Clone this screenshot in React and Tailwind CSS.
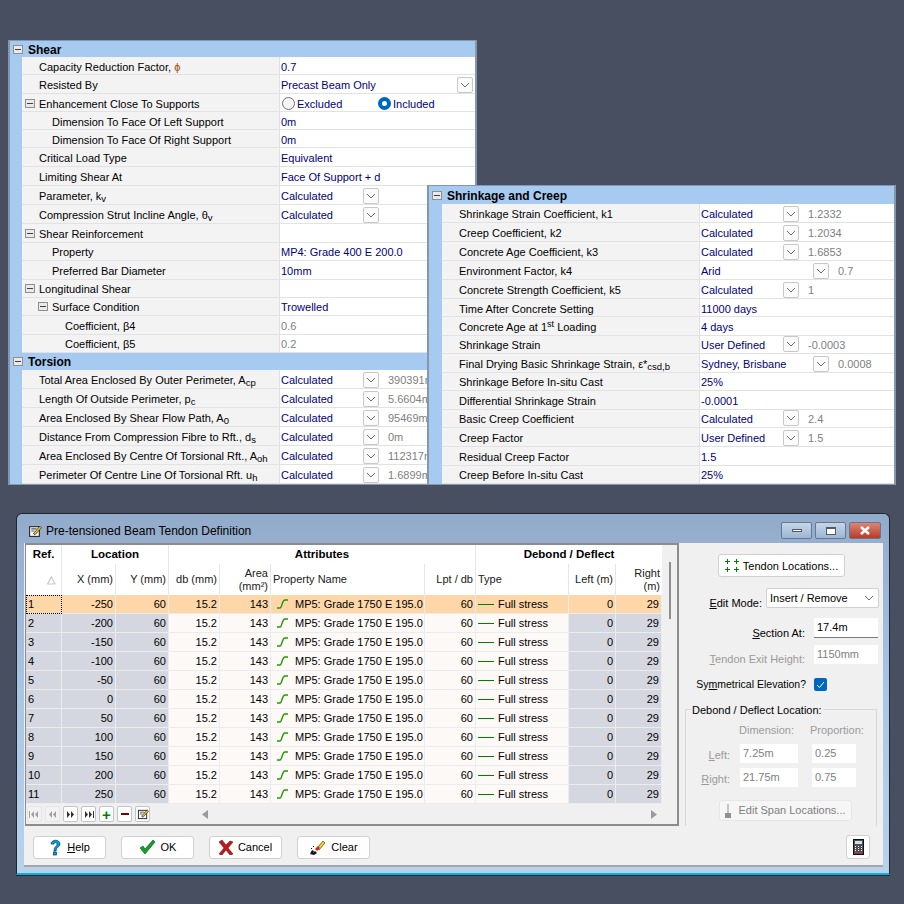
import React from "react";

const FONT = { fontFamily: '"Liberation Sans", Arial, sans-serif' };

function Box() {
  return (
    <span className="inline-flex h-[9px] w-[10px] shrink-0 items-center justify-center border border-[#8f8f8f] bg-[#e9e9e9]">
      <span className="h-px w-[6px] bg-[#404040]" />
    </span>
  );
}

function Chev({ cls = "text-[#6a6a6a]" }) {
  return (
    <svg width="10" height="6" viewBox="0 0 10 6" className={cls}>
      <path d="M1 1l4 4 4-4" fill="none" stroke="currentColor" strokeWidth="1" />
    </svg>
  );
}

function Drop() {
  return (
    <span className="-mt-[2px] flex h-[16px] w-[16px] shrink-0 items-center justify-center rounded-[2px] border border-[#c8c8c8] bg-[#fbfbfb]">
      <Chev />
    </span>
  );
}

function Radio({ on }) {
  return on ? (
    <span className="-mt-[2px] flex h-[13px] w-[13px] shrink-0 items-center justify-center rounded-full bg-[#0067c0]">
      <span className="h-[5px] w-[5px] rounded-full bg-white" />
    </span>
  ) : (
    <span className="-mt-[2px] h-[13px] w-[13px] shrink-0 rounded-full border border-[#707070] bg-[#f5f5f5]" />
  );
}

function Value({ r }) {
  if (r.radio)
    return (
      <div className="flex items-center pl-[2px] text-[#000080]">
        <span className="flex w-[96px] items-center gap-[2px]"><Radio />Excluded</span>
        <span className="flex items-center gap-[2px]"><Radio on />Included</span>
      </div>
    );
  if (r.wide)
    return (
      <div className="flex w-full items-center justify-between pl-[1px] pr-[2px] text-[#000080]">
        {r.v}
        <Drop />
      </div>
    );
  if (r.combo !== undefined)
    return (
      <div className="flex items-center pl-[1px] text-[#000080]">
        <span className={r.arid ? "w-[112px]" : "w-[82px]"}>{r.v}</span>
        <Drop />
        <span className="ml-[9px] whitespace-nowrap text-[#808080]">{r.combo}</span>
      </div>
    );
  return <div className={"whitespace-nowrap pl-[1px] " + (r.g ? "text-[#808080]" : "text-[#000080]")}>{r.v}</div>;
}

function Row({ r }) {
  const pad = r.up ? "pt-[1px]" : "pt-[3px]";
  return (
    <div className="flex" style={{ height: r.h }}>
      <div className={"flex w-[258px] shrink-0 items-center border-b border-r border-[#e2e2e2] bg-[#f3f3f3] text-black " + pad}>
        {r.exp && (
          <span className="-mt-[2px] flex w-0 items-center" style={{ marginLeft: r.l === 1 ? 16 : 3 }}>
            <Box />
          </span>
        )}
        <span className="whitespace-nowrap" style={{ paddingLeft: r.exp ? 14 : [17, 30, 43][r.l || 0] }}>
          {r.t}
        </span>
      </div>
      <div className={"flex min-w-0 flex-1 items-center border-b border-[#e2e2e2] bg-white " + pad}>
        <Value r={r} />
      </div>
    </div>
  );
}

function Head({ t, h }) {
  return (
    <div className="flex items-center gap-[5px] bg-[#a6caf0] pl-[3px] text-[12px] font-bold text-black" style={{ height: h }}>
      <Box />
      <span className="pt-[1px]">{t}</span>
    </div>
  );
}

function Group({ rows, pl }) {
  return (
    <div className={"flex flex-col bg-[#a6caf0] " + pl}>
      {rows.map((r, i) => <Row key={i} r={r} />)}
    </div>
  );
}

const Sub = ({ c }) => <sub className="text-[9.5px]">{c}</sub>;

const shear = [
  { h: 18, t: <>Capacity Reduction Factor, <span className="text-[#a05000]">ϕ</span></>, v: "0.7" },
  { h: 19, t: "Resisted By", v: "Precast Beam Only", wide: true },
  { h: 18, t: "Enhancement Close To Supports", exp: true, radio: true },
  { h: 18, l: 1, t: "Dimension To Face Of Left Support", v: "0m" },
  { h: 18, l: 1, t: "Dimension To Face Of Right Support", v: "0m" },
  { h: 19, t: "Critical Load Type", v: "Equivalent" },
  { h: 19, t: "Limiting Shear At", v: "Face Of Support + d" },
  { h: 19, t: <>Parameter, k<Sub c="v" /></>, v: "Calculated", combo: "" },
  { h: 19, t: <>Compression Strut Incline Angle, θ<Sub c="v" /></>, v: "Calculated", combo: "" },
  { h: 19, t: "Shear Reinforcement", exp: true, v: "" },
  { h: 18, up: true, l: 1, t: "Property", v: "MP4: Grade 400 E 200.0" },
  { h: 19, l: 1, t: "Preferred Bar Diameter", v: "10mm" },
  { h: 18, up: true, t: "Longitudinal Shear", exp: true, v: "" },
  { h: 18, up: true, l: 1, exp: true, t: "Surface Condition", v: "Trowelled" },
  { h: 19, l: 2, t: "Coefficient, β4", v: "0.6", g: true },
  { h: 18, up: true, l: 2, t: "Coefficient, β5", v: "0.2", g: true },
];

const torsion = [
  { t: <>Total Area Enclosed By Outer Perimeter, A<Sub c="cp" /></>, combo: "390391mm²" },
  { t: <>Length Of Outside Perimeter, p<Sub c="c" /></>, combo: "5.6604m" },
  { t: <>Area Enclosed By Shear Flow Path, A<Sub c="0" /></>, combo: "95469mm²" },
  { t: <>Distance From Compression Fibre to Rft., d<Sub c="s" /></>, combo: "0m" },
  { t: <>Area Enclosed By Centre Of Torsional Rft., A<Sub c="oh" /></>, combo: "112317mm²" },
  { t: <>Perimeter Of Centre Line Of Torsional Rft. u<Sub c="h" /></>, combo: "1.6899m" },
].map((r) => ({ ...r, h: 19, v: "Calculated" }));

const creep = [
  { h: 19, t: "Shrinkage Strain Coefficient, k1", v: "Calculated", combo: "1.2332" },
  { h: 19, t: "Creep Coefficient, k2", v: "Calculated", combo: "1.2034" },
  { h: 19, t: "Concrete Age Coefficient, k3", v: "Calculated", combo: "1.6853" },
  { h: 19, t: "Environment Factor, k4", v: "Arid", combo: "0.7", arid: true },
  { h: 19, t: "Concrete Strength Coefficient, k5", v: "Calculated", combo: "1" },
  { h: 18, t: "Time After Concrete Setting", v: "11000 days" },
  { h: 19, t: <>Concrete Age at 1<sup className="text-[9px]">st</sup> Loading</>, v: "4 days" },
  { h: 18, up: true, t: "Shrinkage Strain", v: "User Defined", combo: "-0.0003" },
  { h: 19, t: <>Final Drying Basic Shrinkage Strain, ε*<Sub c="csd,b" /></>, v: "Sydney, Brisbane", combo: "0.0008", arid: true },
  { h: 18, up: true, t: "Shrinkage Before In-situ Cast", v: "25%" },
  { h: 19, t: "Differential Shrinkage Strain", v: "-0.0001" },
  { h: 18, up: true, t: "Basic Creep Coefficient", v: "Calculated", combo: "2.4" },
  { h: 19, t: "Creep Factor", v: "User Defined", combo: "1.5" },
  { h: 19, t: "Residual Creep Factor", v: "1.5" },
  { h: 18, up: true, t: "Creep Before In-situ Cast", v: "25%" },
];

const Curve = () => (
  <svg width="13" height="10" viewBox="0 0 13 10" className="shrink-0">
    <path d="M1 9h3C6 9 6 1 9 1h3" fill="none" stroke="#1f9a00" strokeWidth="1.5" />
  </svg>
);

const COLS = "grid grid-cols-[36px_54px_53px_51px_51px_154px_51px_93px_47px_46px]";
const cell = "flex items-center border-r border-b border-[#ececec] px-[2px] overflow-hidden whitespace-nowrap";

function GridRow({ n, x, sel }) {
  const fixed = sel ? "bg-[#fed7a8]" : "bg-[#d4d7e0]";
  const data = sel ? "bg-[#fed7a8]" : "bg-[#fdf9f7]";
  return (
    <div className={COLS + " h-[19px] text-black"}>
      <div className={cell + " " + fixed + (sel ? " outline-1 -outline-offset-1 outline-dotted outline-black" : "")}>{n}</div>
      <div className={cell + " justify-end " + fixed}>{x}</div>
      <div className={cell + " justify-end " + fixed}>60</div>
      <div className={cell + " justify-end " + data}>15.2</div>
      <div className={cell + " justify-end " + data}>143</div>
      <div className={cell + " gap-[6px] pl-[5px] " + data}><Curve />MP5: Grade 1750 E 195.0</div>
      <div className={cell + " justify-end " + data}>60</div>
      <div className={cell + " gap-[4px] " + data}><span className="h-px w-[16px] bg-[#008000]" />Full stress</div>
      <div className={cell + " justify-end " + fixed}>0</div>
      <div className={cell + " justify-end " + fixed}>29</div>
    </div>
  );
}

const NavBtn = ({ children, dim }) => (
  <span className={"flex h-[16px] w-[15px] items-center justify-center rounded-[2px] border " + (dim ? "border-[#e6e6e6] bg-[#f2f2f2] text-[#a0a0a0]" : "border-[#c4c4c4] bg-white text-[#303030]")}>
    {children}
  </span>
);

const Tri = ({ d, bar }) => (
  <svg width="11" height="7" viewBox="0 0 11 7" fill="currentColor">
    {d === "l" ? (
      <>
        {bar && <rect x="0" y="0" width="1" height="7" />}
        <path d="M5 0v7L2 3.5zM9 0v7L6 3.5z" />
      </>
    ) : (
      <>
        <path d="M2 0v7l3-3.5zM6 0v7l3-3.5z" />
        {bar && <rect x="10" y="0" width="1" height="7" />}
      </>
    )}
  </svg>
);

const Pencil = ({ size = 13 }) => (
  <svg width={size} height={size} viewBox="0 0 13 13" className="shrink-0">
    <rect x="1.5" y="2.5" width="9" height="9" fill="#fff" stroke="#222" />
    <path d="M3 4.5h5M3 6.5h3" stroke="#555" />
    <path d="M5 9l6-7 1.5 1.5-6 6.500z" fill="#f2c230" stroke="#222" strokeWidth=".7" />
  </svg>
);

const Btn = ({ icon, children }) => (
  <div className="flex h-[23px] w-[73px] items-center justify-center gap-[5px] rounded-[3px] border border-[#d0d0d0] bg-white text-black">
    {icon}
    <span>{children}</span>
  </div>
);

function Grid() {
  const rows = [[1, -250], [2, -200], [3, -150], [4, -100], [5, -50], [6, 0], [7, 50], [8, 100], [9, 150], [10, 200], [11, 250]];
  const hb = "flex items-center justify-center border-r border-[#e6e6e6] text-[11.5px] font-bold h-[19px]";
  const hc = "flex items-center border-r border-[#e6e6e6] text-[#202020] px-[2px] leading-[13px] h-[31px]";
  return (
    <div className="flex h-[283px] w-[654px] shrink-0 flex-col border-b-2 border-l border-r-2 border-t-2 border-[#8c8c8c] bg-[#f0f0f0]">
      <div className="flex min-h-0 flex-1">
        <div className="flex w-[636px] shrink-0 flex-col overflow-hidden bg-white">
          <div className={COLS}>
            <div className={hb}>Ref.</div>
            <div className={hb + " col-span-2"}>Location</div>
            <div className={hb + " col-span-4"}>Attributes</div>
            <div className={hb + " col-span-3 border-r-0"}>Debond / Deflect</div>
          </div>
          <div className={COLS}>
            <div className={hc + " justify-end pr-[6px] text-[#a0a0a0]"}>△</div>
            <div className={hc + " justify-end"}>X (mm)</div>
            <div className={hc + " justify-end"}>Y (mm)</div>
            <div className={hc + " justify-end"}>db (mm)</div>
            <div className={hc + " justify-end text-right"}>Area<br />(mm²)</div>
            <div className={hc}>Property Name</div>
            <div className={hc + " justify-end"}>Lpt / db</div>
            <div className={hc}>Type</div>
            <div className={hc + " justify-end"}>Left (m)</div>
            <div className={hc + " justify-end text-right border-r-0"}>Right<br />(m)</div>
          </div>
          {rows.map((r) => <GridRow key={r[0]} n={r[0]} x={r[1]} sel={r[0] === 1} />)}
        </div>
        <div className="flex flex-1 justify-center bg-[#f0f0f0] pt-[17px]">
          <div className="h-[57px] w-[2px] bg-[#8f8f8f]" />
        </div>
      </div>
      <div className="flex h-[20px] shrink-0 items-center bg-[#f0f0f0] pl-[1px]">
        <div className="flex gap-[3px]">
          <NavBtn dim><Tri d="l" bar /></NavBtn>
          <NavBtn dim><Tri d="l" /></NavBtn>
          <NavBtn><Tri d="r" /></NavBtn>
          <NavBtn><Tri d="r" bar /></NavBtn>
          <NavBtn><span className="text-[15px] font-bold leading-none text-[#008000]">+</span></NavBtn>
          <NavBtn><span className="h-[2px] w-[8px] bg-[#800000]" /></NavBtn>
          <NavBtn><Pencil size={12} /></NavBtn>
        </div>
        <div className="ml-[52px] flex flex-1 items-center justify-between pr-[20px] text-[#9a9a9a]">
          <svg width="6" height="9" viewBox="0 0 6 9" fill="currentColor"><path d="M6 0v9L0 4.500z" /></svg>
          <svg width="6" height="9" viewBox="0 0 6 9" fill="currentColor"><path d="M0 0v9l6-4.500z" /></svg>
        </div>
      </div>
    </div>
  );
}

const Plus4 = () => (
  <svg width="14" height="15" viewBox="0 0 14 15" stroke="#008000" className="shrink-0">
    <path d="M2.500 1v5M0 3.500h5M11.500 1v5M9 3.500h5M2.500 9v5M0 11.500h5M11.500 9v5M9 11.500h5" />
  </svg>
);

function Side() {
  const inp = "flex items-center bg-white px-[3px]";
  return (
    <div className="flex min-w-0 flex-1 flex-col bg-[#f0f0f0] text-black">
      <div className="ml-[39px] mt-[11px] flex h-[23px] w-[127px] items-center justify-center gap-[4px] rounded-[3px] border border-[#d0d0d0] bg-white">
        <Plus4 /><span className="pt-[1px]">Tendon Locations...</span>
      </div>
      <div className="mt-[11px] flex h-[20px] items-start justify-end pr-[4px]">
        <span className="mr-[4px] pt-[10px]"><u>E</u>dit Mode:</span>
        <span className="flex h-[20px] w-[113px] items-center justify-between rounded-[2px] border border-[#d0d0d0] bg-white pl-[3px] pr-[4px]">
          Insert / Remove<Chev />
        </span>
      </div>
      <div className="mt-[10px] flex h-[20px] items-start justify-end pr-[5px]">
        <span className="mr-[9px] pt-[10px]"><u>S</u>ection At:</span>
        <span className={inp + " h-[20px] w-[64px] border-b border-[#7a7a7a]"}>17.4m</span>
      </div>
      <div className="mt-[7px] flex h-[19px] items-start justify-end pr-[5px] text-[#9a9a9a]">
        <span className="mr-[9px] pt-[9px]"><u>T</u>endon Exit Height:</span>
        <span className={inp + " h-[19px] w-[64px] text-[#808080]"}>1150mm</span>
      </div>
      <div className="mt-[14px] flex h-[13px] items-center justify-end gap-[8px] pr-[56px]">
        <span className="text-[10.5px]">Sy<u>m</u>metrical Elevation?</span>
        <span className="flex h-[13px] w-[13px] items-center justify-center rounded-[2px] bg-[#0067c0]">
          <svg width="9" height="8" viewBox="0 0 9 8"><path d="M1 4l2.500 2.500L8 1" fill="none" stroke="#fff" /></svg>
        </span>
      </div>
      <div className="relative ml-[6px] mt-[18px] flex w-[192px] flex-1 flex-col border-l border-r border-t border-[#d8d8d8]">
        <span className="absolute -top-[5px] left-[5px] bg-[#f0f0f0] px-[1px]">Debond / Deflect Location:</span>
        <div className="ml-[53px] mt-[15px] flex text-[#9a9a9a]">
          <span className="w-[71px]">Dimension:</span>
          <span>Proportion:</span>
        </div>
        <div className="mt-[8px] grid grid-cols-[44px_58px_48px] gap-x-[10px] gap-y-[5px] text-[#808080]">
          <span className="pt-[6px] text-right text-[#9a9a9a]"><u>L</u>eft:</span>
          <span className={inp + " h-[19px]"}>7.25m</span>
          <span className={inp + " ml-[4px] h-[19px]"}>0.25</span>
          <span className="pt-[6px] text-right text-[#9a9a9a]"><u>R</u>ight:</span>
          <span className={inp + " h-[19px]"}>21.75m</span>
          <span className={inp + " ml-[4px] h-[19px]"}>0.75</span>
        </div>
        <div className="ml-[33px] mt-[13px] flex h-[21px] w-[133px] items-center justify-center gap-[7px] rounded-[3px] border border-[#e6e6e6] bg-[#f6f6f6] text-[#808080]">
          <svg width="6" height="14" viewBox="0 0 6 14"><path d="M3 0v9" stroke="#909090" /><rect x="0" y="9" width="6" height="5" fill="#909090" /></svg>
          Edit Span Locations...
        </div>
      </div>
    </div>
  );
}

const Help = () => (
  <svg width="13" height="17" viewBox="0 0 13 17" className="shrink-0">
    <path d="M2 5c0-5 9-5 9 0 0 3-4 3-4 7H5c0-5 3-4 3-7 0-2-3-2-3 0z" fill="#00a0c8" stroke="#003c78" strokeWidth=".7" />
    <rect x="4.500" y="13" width="3" height="3" fill="#00a0c8" stroke="#003c78" strokeWidth=".7" />
  </svg>
);
const Check = () => (
  <svg width="17" height="15" viewBox="0 0 17 15" className="shrink-0">
    <path d="M1 8l3-2 2 3 8-9 2 2L6 14z" fill="#1c9c1c" stroke="#064" strokeWidth=".7" />
  </svg>
);
const Cross = () => (
  <svg width="14" height="15" viewBox="0 0 14 15" className="shrink-0">
    <path d="M0 2l3-2 4 5 4-4 3 1-5 6 5 6-3 1-4-5-4 5-3-1 5-6z" fill="#c01818" stroke="#701010" strokeWidth=".6" />
  </svg>
);
const Eraser = () => (
  <svg width="17" height="17" viewBox="0 0 17 17" className="shrink-0">
    <path d="M8 9l6-7 2 2-6 7z" fill="#f5d020" stroke="#222" strokeWidth=".6" />
    <path d="M6 10l3-3 2 2-3 3z" fill="#e02020" />
    <path d="M1 15l2-4 2 1-1 2 2-2 2 2-3 2zM2 9h1v1H2zM4 7h1v1H4z" fill="#111" />
  </svg>
);
const Calc = () => (
  <svg width="11" height="16" viewBox="0 0 11 16" className="shrink-0">
    <rect x=".5" y=".5" width="10" height="15" fill="#505050" stroke="#111" />
    <rect x="2" y="2" width="7" height="3" fill="#c8e0f0" />
    <path d="M2 7h1v1H2zM5 7h1v1H5zM8 7h1v1H8zM2 9h1v1H2zM5 9h1v1H5zM8 9h1v1H8zM2 11h1v1H2zM5 11h1v1H5zM8 11h1v1H8z" fill="#fff" />
    <path d="M2 13h3v1H2zM6 13h3v1H6z" fill="#e03030" />
  </svg>
);

function WinBtn({ cls, children }) {
  return (
    <span className={"flex h-[17px] items-center justify-center rounded-[2px] border border-[#66788f] " + cls}>{children}</span>
  );
}

export default function App() {
  return (
    <div className="relative h-[904px] w-[904px] overflow-hidden bg-[#474f60] text-[11px] leading-none" style={FONT}>
      <div className="absolute left-[8px] top-[40px] w-[469px] border-2 border-t border-b border-[#8397b0] bg-[#a6caf0]">
        <Head t="Shear" h={16} />
        <Group rows={shear} pl="pl-[12px]" />
        <Head t="Torsion" h={17} />
        <Group rows={torsion} pl="pl-[12px]" />
      </div>
      <div className="absolute left-[427px] top-[185px] w-[469px] border-2 border-t border-b border-[#8397b0] bg-[#a6caf0]">
        <Head t="Shrinkage and Creep" h={18} />
        <Group rows={creep} pl="pl-[13px]" />
      </div>

      <div className="absolute left-[16px] top-[513px] flex h-[362px] w-[874px] flex-col rounded-t-[6px] border border-b-2 border-[#20262e] border-b-[#10b0d8] bg-gradient-to-b from-[#93abca] via-[#a9c6e4] to-[#b8d2ec] shadow-[0_1px_0_#20262e]">
        <div className="flex h-[29px] shrink-0 items-center pl-[11px] pr-[8px] pt-[4px]">
          <Pencil size={14} />
          <span className="ml-[4px] text-[12px] text-black">Pre-tensioned Beam Tendon Definition</span>
          <div className="ml-auto flex gap-[3px]">
            <WinBtn cls="w-[31px] bg-gradient-to-b from-[#c6d6e8] to-[#9db6d3]"><span className="h-[3px] w-[10px] border border-[#505a68] bg-white" /></WinBtn>
            <WinBtn cls="w-[31px] bg-gradient-to-b from-[#c6d6e8] to-[#9db6d3]"><span className="h-[8px] w-[10px] border border-t-2 border-[#505a68] bg-white" /></WinBtn>
            <WinBtn cls="w-[32px] bg-gradient-to-b from-[#dc8474] to-[#b83a28]">
              <svg width="10" height="9" viewBox="0 0 10 9"><path d="M1 1l8 7M9 1L1 8" stroke="#fff" strokeWidth="2.500" /></svg>
            </WinBtn>
          </div>
        </div>
        <div className="ml-[7px] mr-[6px] flex h-[283px] shrink-0 bg-[#f0f0f0] pl-[1px]">
          <Grid />
          <Side />
        </div>
        <div className="ml-[7px] mr-[6px] flex h-[41px] shrink-0 items-center gap-[15px] border-b-2 border-[#a8a8a8] bg-[#f0f0f0] pl-[9px] pr-[13px] pt-[3px]">
          <Btn icon={<Help />}><u>H</u>elp</Btn>
          <Btn icon={<Check />}>OK</Btn>
          <Btn icon={<Cross />}>Cancel</Btn>
          <Btn icon={<Eraser />}>Clear</Btn>
          <div className="ml-auto flex h-[24px] w-[24px] items-center justify-center rounded-[3px] border border-[#d0d0d0] bg-white">
            <Calc />
          </div>
        </div>
      </div>
    </div>
  );
}
